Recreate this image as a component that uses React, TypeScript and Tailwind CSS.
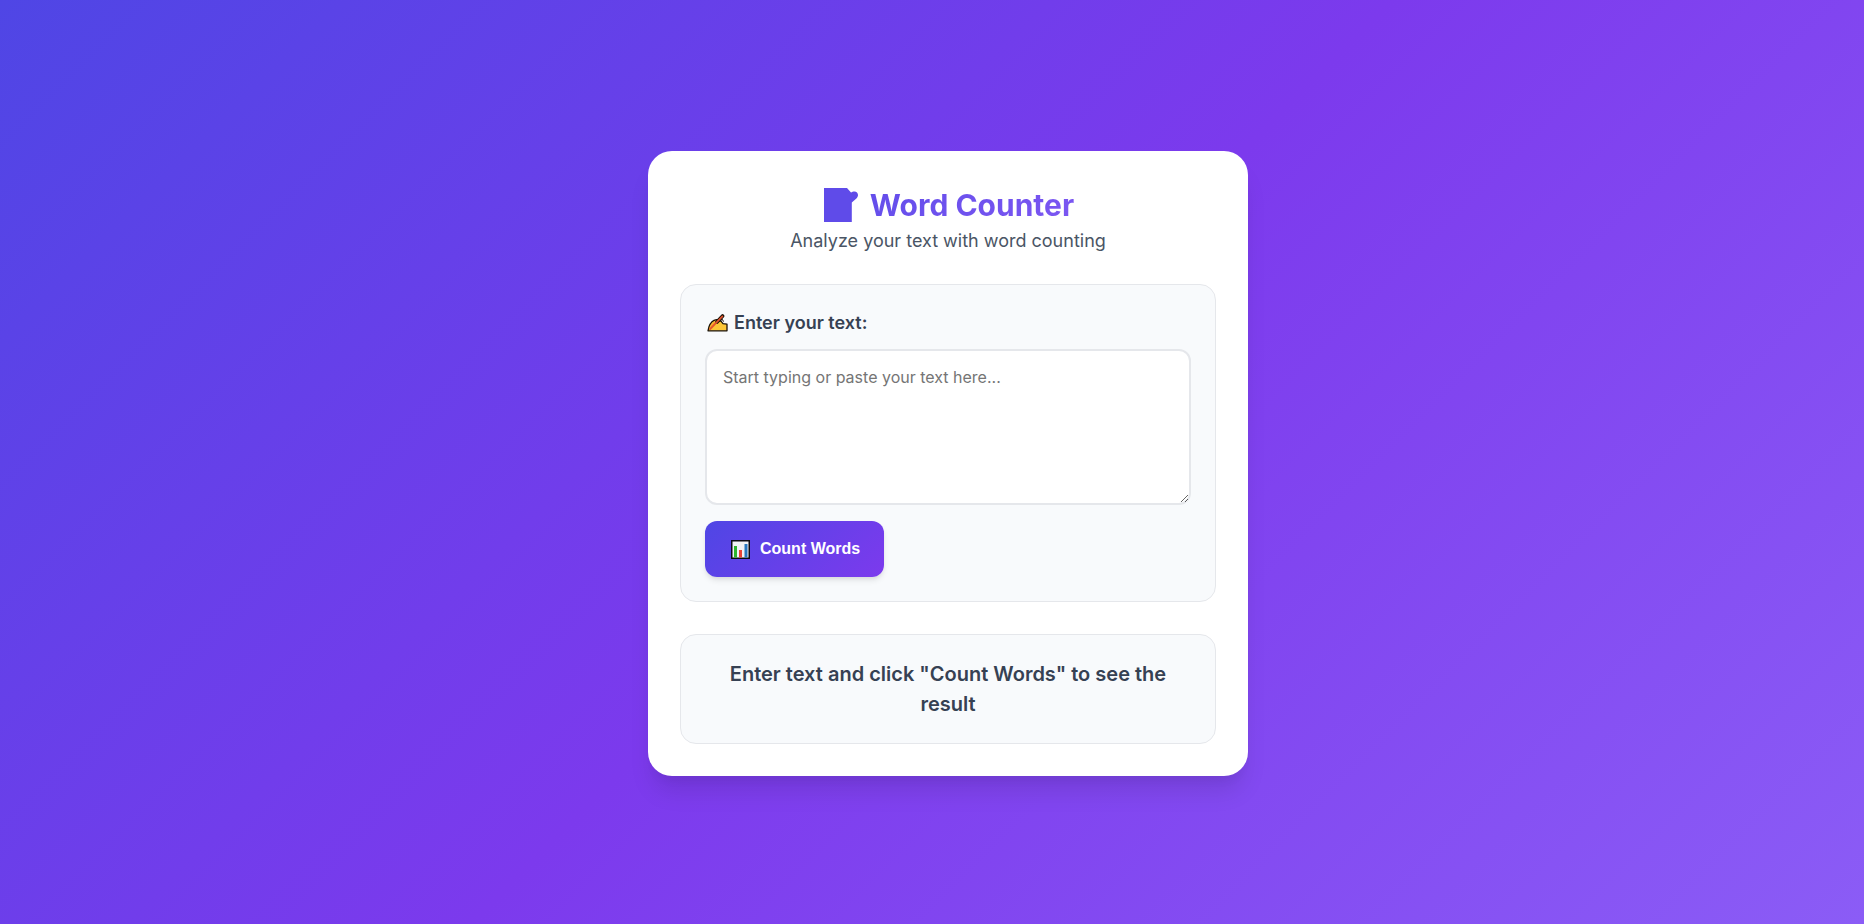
import { useState } from "react";
import type { FormEvent } from "react";

function MemoIcon() {
  return (
    <svg className="h-[34px] w-9" viewBox="-2 0 36 34" fill="#5f4be9" aria-hidden="true">
      <path d="M0 0H23L27 4.5C28 4 29 3.4 30.5 3.4C32.5 3.4 34 5 34 7C34 8.4 33.4 9.4 32.4 10.4L27.8 14.6V34H0Z" />
    </svg>
  );
}

function WritingHandIcon() {
  return (
    <svg className="h-[18px] w-[23px]" viewBox="-2 0 23 18" aria-hidden="true">
      <path
        d="M1 16.8L2 12.6C3.4 8.8 6 6.2 9.5 5.6L14 7.2L16 9.6L20 10.2V16.8Z"
        fill="#fcc636"
        stroke="#1b1208"
        strokeWidth="1.3"
        strokeLinejoin="round"
      />
      <path d="M2.2 15.6C3 12 5.4 7.8 9.6 6.6L11 8L4.6 15.2Z" fill="#f9a32c" />
      <path d="M10 8L15.6 2" stroke="#1b1208" strokeWidth="3.6" strokeLinecap="round" />
      <path d="M3 15.2L15.4 2.4" stroke="#e5542e" strokeWidth="1.7" strokeLinecap="round" />
      <path d="M12.6 7.4L15.2 5.2L16.6 7.6" fill="none" stroke="#1b1208" strokeWidth="1" />
    </svg>
  );
}

function BarChartIcon() {
  return (
    <svg className="h-5 w-[21px]" viewBox="-2 -1 21 20" aria-hidden="true">
      <rect x="0.75" y="0.75" width="17.5" height="17.5" fill="#f1f3f5" stroke="#0b0b12" strokeWidth="1.5" />
      <rect x="3" y="6" width="3" height="11.5" fill="#2db52d" />
      <rect x="8" y="10" width="3" height="7.5" fill="#ea4335" />
      <rect x="13.5" y="4" width="3" height="13.5" fill="#2878c0" />
    </svg>
  );
}

export default function App() {
  const [text, setText] = useState("");
  const [count, setCount] = useState<number | null>(null);

  const handleSubmit = (event: FormEvent) => {
    event.preventDefault();
    setCount(text.split(/\s+/).filter(Boolean).length);
  };

  return (
    <main className="flex min-h-screen items-center justify-center bg-[linear-gradient(135deg,#4f46e5_0%,#7c3aed_50%,#8b5cf6_100%)] pt-[35px] pr-4 pb-8 pl-12 font-[Inter,sans-serif] text-gray-700">
      <div className="w-full max-w-[600px] rounded-3xl bg-white p-8 shadow-[0_20px_25px_-5px_rgba(0,0,0,0.1),0_10px_10px_-5px_rgba(0,0,0,0.04)]">
        <header className="mb-[29px] text-center">
          <h1 className="flex items-center justify-center gap-3 bg-[linear-gradient(135deg,#4f46e5,#8b5cf6)] bg-clip-text text-3xl leading-[44px] font-bold text-transparent">
            <MemoIcon />
            Word Counter
          </h1>
          <p className="text-lg leading-7 text-gray-600">Analyze your text with word counting</p>
        </header>

        <form onSubmit={handleSubmit} className="mb-8 rounded-2xl border border-gray-200 bg-slate-50 p-6">
          <label htmlFor="text" className="mb-3 flex items-center gap-1.5 text-lg leading-7 font-semibold">
            <WritingHandIcon />
            Enter your text:
          </label>
          <textarea
            id="text"
            value={text}
            onChange={(event) => setText(event.target.value)}
            placeholder="Start typing or paste your text here..."
            className="mb-4 block h-[156px] w-full resize-y rounded-xl border-2 border-gray-200 bg-white p-4 text-base leading-5 placeholder:text-[#757575]"
          />
          <button
            type="submit"
            className="flex h-14 items-center gap-2.5 rounded-xl bg-[linear-gradient(135deg,#4f46e5,#7c3aed)] px-6 font-['Liberation_Sans',sans-serif] text-base font-semibold text-white shadow-[0_4px_6px_-1px_rgba(0,0,0,0.1),0_2px_4px_-1px_rgba(0,0,0,0.06)]"
          >
            <BarChartIcon />
            Count Words
          </button>
        </form>

        <p role="status" className="rounded-2xl border border-gray-200 bg-slate-50 p-6 text-center text-xl leading-[30px] font-semibold">
          {count === null ? 'Enter text and click "Count Words" to see the result' : `Word count: ${count}`}
        </p>
      </div>
    </main>
  );
}
